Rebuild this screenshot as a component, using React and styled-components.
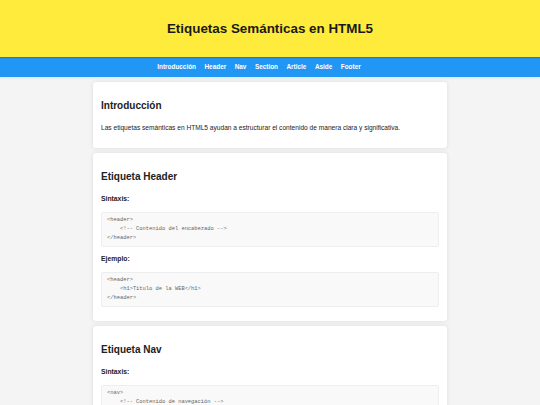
import React from "react";
import styled, { createGlobalStyle } from "styled-components";

const links = ["Introducción", "Header", "Nav", "Section", "Article", "Aside", "Footer"];

const sections = [
  {
    title: "Etiqueta Header",
    syntax: "<header>\n    <!-- Contenido del encabezado -->\n</header>",
    example: "<header>\n    <h1>Título de la WEB</h1>\n</header>",
  },
  {
    title: "Etiqueta Nav",
    syntax: "<nav>\n    <!-- Contenido de navegación -->\n</nav>",
    example: "<nav>\n    <a href=\"#inicio\">Inicio</a>\n</nav>",
  },
];

function App() {
  return (
    <>
      <GlobalStyle />
      <Header>
        <h1>Etiquetas Semánticas en HTML5</h1>
      </Header>
      <Nav>
        {links.map((l) => (
          <NavLink key={l} href={"#" + l.toLowerCase()}>
            {l}
          </NavLink>
        ))}
      </Nav>
      <Main>
        <Card id="introduccion">
          <Title>Introducción</Title>
          <Text>
            Las etiquetas semánticas en HTML5 ayudan a estructurar el contenido de manera clara y
            significativa.
          </Text>
        </Card>
        {sections.map((s) => (
          <Card key={s.title}>
            <Title>{s.title}</Title>
            <SubTitle>Sintaxis:</SubTitle>
            <Code>{s.syntax}</Code>
            <SubTitle>Ejemplo:</SubTitle>
            <Code>{s.example}</Code>
          </Card>
        ))}
      </Main>
    </>
  );
}

export default App;

const GlobalStyle = createGlobalStyle`
  body {
    margin: 0;
    background: #f4f4f4;
    font-family: "Liberation Sans", Arial, sans-serif;
    color: #222;
  }
`;

const Header = styled.header`
  background: #ffeb3b;
  padding: 20px 0;
  text-align: center;
  box-shadow: 0 1px 1px rgba(0, 0, 0, 0.15);
  position: relative;

  h1 {
    margin: 0;
    font-size: 13.4px;
    line-height: 17px;
    color: #1a1a1a;
  }
`;

const Nav = styled.nav`
  background: #2196f3;
  padding: 6px 22px 6px 0;
  display: flex;
  justify-content: center;
  gap: 8.5px;
  box-shadow: 0 1px 2px rgba(33, 150, 243, 0.15);
`;

const NavLink = styled.a`
  color: #fff;
  text-decoration: none;
  font-weight: bold;
  font-size: 6.4px;
  line-height: 8px;
`;

const Main = styled.main`
  width: 354px;
  margin: 5px auto 0;
  display: flex;
  flex-direction: column;
  gap: 5px;
`;

const Card = styled.section`
  background: #fff;
  border-radius: 3px;
  padding: 8px 8px 6px;
  box-shadow: 0 0 4px rgba(0, 0, 0, 0.1);
`;

const Title = styled.h2`
  margin: 10px 0 12px;
  font-size: 10px;
  line-height: 12px;
  color: #222;
`;

const Text = styled.p`
  margin: 0 0 10px;
  font-size: 6.6px;
  line-height: 8px;
  color: #222;
`;

const SubTitle = styled.h3`
  margin: 0 0 9px;
  font-size: 6.8px;
  line-height: 8px;
  color: #222;
`;

const Code = styled.pre`
  margin: 0 0 8px;
  padding: 3px 5px;
  background: #f9f9f9;
  border: 1px solid #eee;
  border-radius: 2px;
  font-family: "Liberation Mono", "Courier New", monospace;
  font-size: 5.4px;
  line-height: 9px;
  color: #666;
  white-space: pre;
`;
